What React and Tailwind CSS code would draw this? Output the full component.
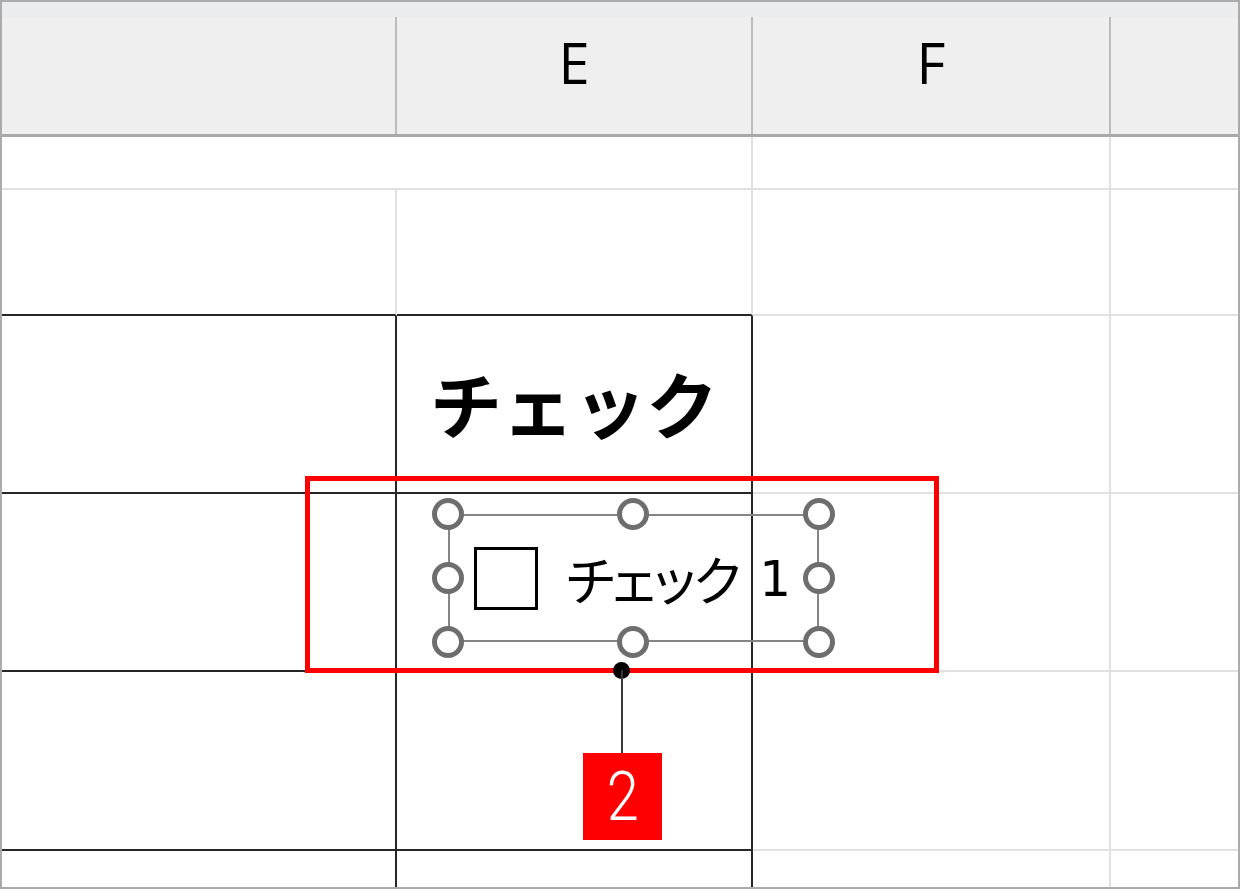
const jp = "font-['Noto_Sans_CJK_JP','Noto_Sans',sans-serif]";

function Handle({ x, y }) {
  return (
    <span
      className="absolute h-[32px] w-[32px] -translate-x-1/2 -translate-y-1/2 rounded-full border-[5px] border-[#6e6e6e] bg-white"
      style={{ left: x, top: y }}
    />
  );
}

export default function App() {
  const hx = [446, 631, 817];
  const hy = [512, 576, 640];

  return (
    <div className="relative h-[889px] w-[1240px] overflow-hidden border-2 border-[#ababab] bg-white">
      {/* column headers */}
      <div className="h-[15px] bg-[#ebeced]" />
      <div className="flex h-[120px] border-b-[3px] border-[#a9a9a9] bg-[#efefef] font-['Open_Sans','Liberation_Sans',sans-serif] text-[56px] leading-none text-black">
        <div className="w-[395px] border-r-2 border-[#bcbcbc]" />
        <div className="flex w-[356px] justify-center border-r-2 border-[#bcbcbc] pt-[17px]">E</div>
        <div className="flex w-[358px] justify-center border-r-2 border-[#bcbcbc] pt-[17px]">F</div>
        <div className="flex-1" />
      </div>

      {/* row 1 */}
      <div className="flex h-[53px]">
        <div className="w-[751px] border-r-2 border-b-2 border-[#e1e1e1]" />
        <div className="w-[358px] border-r-2 border-b-2 border-[#e1e1e1]" />
        <div className="flex-1 border-b-2 border-[#e1e1e1]" />
      </div>

      {/* row 2 */}
      <div className="flex h-[126px]">
        <div className="w-[395px] border-r-2 border-b-2 border-r-[#e1e1e1] border-b-[#262626]" />
        <div className="w-[356px] border-r-2 border-b-2 border-r-[#e1e1e1] border-b-[#262626]" />
        <div className="w-[358px] border-r-2 border-b-2 border-[#e1e1e1]" />
        <div className="flex-1 border-b-2 border-[#e1e1e1]" />
      </div>

      {/* row 3 */}
      <div className="flex h-[178px]">
        <div className="w-[395px] border-r-2 border-b-2 border-[#262626]" />
        <div className={`flex w-[356px] items-center justify-center border-r-2 border-b-2 border-[#262626] pb-[4px] text-[72px] font-bold leading-none text-black ${jp}`}>
          チェック
        </div>
        <div className="w-[358px] border-r-2 border-b-2 border-[#e1e1e1]" />
        <div className="flex-1 border-b-2 border-[#e1e1e1]" />
      </div>

      {/* row 4 */}
      <div className="flex h-[178px]">
        <div className="w-[395px] border-r-2 border-b-2 border-[#262626]" />
        <div className="w-[356px] border-r-2 border-b-2 border-[#262626]" />
        <div className="w-[358px] border-r-2 border-b-2 border-[#e1e1e1]" />
        <div className="flex-1 border-b-2 border-[#e1e1e1]" />
      </div>

      {/* row 5 */}
      <div className="flex h-[179px]">
        <div className="w-[395px] border-r-2 border-b-2 border-[#262626]" />
        <div className="w-[356px] border-r-2 border-b-2 border-[#262626]" />
        <div className="w-[358px] border-r-2 border-b-2 border-[#e1e1e1]" />
        <div className="flex-1 border-b-2 border-[#e1e1e1]" />
      </div>

      {/* row 6 */}
      <div className="flex h-[60px]">
        <div className="w-[395px] border-r-2 border-[#262626]" />
        <div className="w-[356px] border-r-2 border-[#262626]" />
        <div className="w-[358px] border-r-2 border-[#e1e1e1]" />
        <div className="flex-1" />
      </div>

      {/* selected check box control */}
      <div className="absolute left-[446px] top-[512px] h-[128px] w-[371px] border-2 border-[#858585]" />
      <div className={`absolute left-[472px] top-[545px] flex items-center text-black ${jp}`}>
        <span className="h-[63px] w-[64px] border-[3px] border-black" />
        <span className="ml-[28px] text-[53px] leading-none tracking-[-2px] [font-feature-settings:'palt']">チェック</span>
        <span className="ml-[20px] font-['DejaVu_Sans',sans-serif] text-[50px] leading-none">1</span>
      </div>
      {hx.map((x) => hy.map((y) => (x === 631 && y === 576 ? null : <Handle key={`${x}-${y}`} x={x} y={y} />)))}

      {/* red highlight */}
      <div className="absolute left-[303px] top-[474px] h-[197px] w-[634px] border-[5px] border-[#ff0000]" />

      {/* callout */}
      <span className="absolute left-[611px] top-[660px] h-[17px] w-[17px] rounded-full bg-black" />
      <span className="absolute left-[619px] top-[668px] h-[84px] w-[2px] bg-[#3a3a3a]" />
      <div className="absolute left-[581px] top-[751px] flex h-[87px] w-[79px] items-center justify-center bg-[#ff0000] font-['Roboto','Liberation_Sans',sans-serif] text-[68px] font-light leading-none text-white">
        <span className="scale-x-[0.85]">2</span>
      </div>
    </div>
  );
}
